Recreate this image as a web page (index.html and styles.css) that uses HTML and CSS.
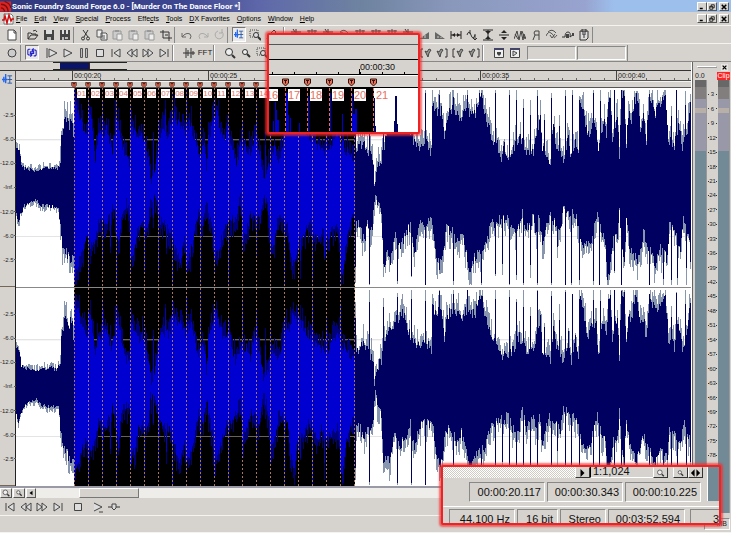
FILE: index.html
```html
<!DOCTYPE html>
<html lang="en">
<head>
<meta charset="utf-8">
<title>Sonic Foundry Sound Forge 6.0</title>
<link rel="stylesheet" href="styles.css">
</head>
<body>
<svg class="sprite" aria-hidden="true">
  <symbol id="new" viewBox="0 0 12 12"><path d="M2 1h6l2 2v8H2z" fill="#fff" stroke="#444"/><path d="M8 1v3h2" fill="none" stroke="#444"/></symbol>
  <symbol id="open" viewBox="0 0 12 12"><path d="M1 10V4h3l1 1h4v2M1 10l3-4h7l-3 4zM6 2q3-2 4 1" fill="none" stroke="#333"/></symbol>
  <symbol id="save" viewBox="0 0 12 12"><path d="M1 1h10v10H1z" fill="#444"/><path d="M3 1h6v4H3z" fill="#ddd"/><path d="M4 8h4v3H4z" fill="#bbb"/></symbol>
  <symbol id="saveas" viewBox="0 0 12 12"><path d="M1 1h10v10H1z" fill="#444"/><path d="M3 1h2v4H3zM7 1h2v4H7z" fill="#ddd"/><path d="M3 8h2v3H3zM6 8h3v2H6z" fill="#bbb"/></symbol>
  <symbol id="cut" viewBox="0 0 12 12"><path d="M3 1l5 7M8 1L4 8" fill="none" stroke="#333"/><circle cx="3" cy="9.500" r="1.500" fill="none" stroke="#333"/><circle cx="8" cy="9.500" r="1.500" fill="none" stroke="#333"/></symbol>
  <symbol id="copy" viewBox="0 0 12 12"><path d="M1 1h5v7H1zM5 4h5l1 1v6H5z" fill="#eee" stroke="#555"/><path d="M6 7h3M6 9h3" stroke="#555"/></symbol>
  <symbol id="paste" viewBox="0 0 12 12"><path d="M1 2h8v8H1z" fill="#ccc" stroke="#999"/><path d="M3 1h4v2H3z" fill="#999"/><path d="M5 5h5v6H5z" fill="#eee" stroke="#999"/></symbol>
  <symbol id="trim" viewBox="0 0 12 12"><path d="M3 1v8h9M0 3h9v9M5 6h3" fill="none" stroke="#333"/></symbol>
  <symbol id="undo" viewBox="0 0 12 12"><path d="M1 4v4h4M1 8q4-5 8-3 2 2 0 5" fill="none" stroke="#666"/></symbol>
  <symbol id="redo" viewBox="0 0 12 12"><path d="M11 4v4H7M11 8Q7 3 3 5q-2 2 0 5" fill="none" stroke="#aaa"/></symbol>
  <symbol id="repeat" viewBox="0 0 12 12"><path d="M9 3a4 4 0 1 1-4-1M9 0v4H6" fill="none" stroke="#aaa"/></symbol>
  <symbol id="edit" viewBox="0 0 12 12"><path d="M0 6h6M2 3v6M4 0v10" stroke="#26e" stroke-width="1.500" fill="none"/><path d="M6 2h5M8.500 2v8M6 10h5M6 6h5" stroke="#25a" fill="none"/></symbol>
  <symbol id="magsel" viewBox="0 0 12 12"><path d="M1 1h8v7H1z" fill="none" stroke="#444" stroke-dasharray="1 1"/><circle cx="7" cy="6" r="2.500" fill="#ddd" stroke="#333"/><path d="M9 8l3 3" stroke="#333" stroke-width="2"/></symbol>
  <symbol id="pencil" viewBox="0 0 12 12"><path d="M2 10l1-3 6-6 2 2-6 6z" fill="none" stroke="#333"/></symbol>
  <symbol id="cross" viewBox="0 0 12 12"><path d="M6 0v12M1 3h10M3 0l2 3" fill="none" stroke="#333"/></symbol>
  <symbol id="tag" viewBox="0 0 12 12"><path d="M1 2h10M3 1v5M6 0v4M9 1v3M2 5l4 3 4-4" fill="none" stroke="#444"/></symbol>
  <symbol id="fin" viewBox="0 0 12 12"><path d="M1 10h10V3z" fill="#666"/><path d="M4 9V7M7 9V6" stroke="#ccc"/></symbol>
  <symbol id="fout" viewBox="0 0 12 12"><path d="M1 10h10L1 3z" fill="#666"/><path d="M4 9V7M7 9V8" stroke="#ccc"/></symbol>
  <symbol id="hspan" viewBox="0 0 12 12"><path d="M1 2v8M11 2v8M1 6h10" stroke="#222"/><path d="M5 4L2 6l3 2zM7 4l3 2-3 2z" fill="#222"/></symbol>
  <symbol id="swap" viewBox="0 0 12 12"><path d="M1 6q2-6 4 0t4 0M4 1v4M9 5v6M7 9l2 2 2-2" fill="none" stroke="#333"/></symbol>
  <symbol id="vspan" viewBox="0 0 12 12"><path d="M1 1h10M1 11h10M6 1v10" stroke="#222"/><path d="M3 2h6L6 5zM3 10h6L6 7z" fill="#222"/></symbol>
  <symbol id="vmid" viewBox="0 0 12 12"><path d="M1 6h10" stroke="#222"/><path d="M3 4l3-3 3 3zM3 8l3 3 3-3z" fill="#222"/></symbol>
  <symbol id="peaks" viewBox="0 0 12 12"><path d="M0 10l3-8 2 9 2-9 2 9 1-6 2 5M1 5l3 5M8 2l3 8" fill="none" stroke="#444"/></symbol>
  <symbol id="rev" viewBox="0 0 12 12"><path d="M9 2v9M9 2H5q-2 2 0 4h4M5 6l-2 5" fill="none" stroke="#444"/></symbol>
  <symbol id="wave" viewBox="0 0 12 12"><path d="M0 7q2-5 5-3t3 4 3-2M2 3q4-4 8 1M4 6l2 3 3-4" fill="none" stroke="#555"/></symbol>
  <symbol id="env" viewBox="0 0 12 12"><path d="M0 8h3q0-5 3-5t2 5l4-3" fill="none" stroke="#333"/><path d="M4 5h3v4H4zM10 4h2v3h-2z" fill="#444"/></symbol>
  <symbol id="clip" viewBox="0 0 12 12"><path d="M2 2h8v7l-2 2H2z" fill="#ddd" stroke="#333"/><path d="M4 0h4v3H4zM4 5h4M6 5v4" fill="none" stroke="#333"/></symbol>
  <symbol id="rec" viewBox="0 0 12 12"><circle cx="6" cy="6" r="4" fill="#ccc" stroke="#444"/></symbol>
  <symbol id="loop" viewBox="0 0 12 12"><path d="M4 2H2L1 3v5l1 1h3M8 10h2l1-1V4l-1-1H7M4 7l2 2-2 2M8 1L6 3l2 2M4 5h4v2H4z" fill="none" stroke="#22c" stroke-width="1.300"/></symbol>
  <symbol id="playall" viewBox="0 0 12 12"><path d="M1 1v10M3 2l8 4-8 4z" fill="#ddd" stroke="#444"/></symbol>
  <symbol id="play" viewBox="0 0 12 12"><path d="M2 2l8 4-8 4z" fill="#ddd" stroke="#444"/></symbol>
  <symbol id="pause" viewBox="0 0 12 12"><path d="M2.500 1.500h2v9h-2zM7.500 1.500h2v9h-2z" fill="#bbb" stroke="#555"/></symbol>
  <symbol id="stop" viewBox="0 0 12 12"><path d="M2.500 2.500h7v7h-7z" fill="#ddd" stroke="#444"/></symbol>
  <symbol id="start" viewBox="0 0 12 12"><path d="M2 2v8M10 2L4 6l6 4z" fill="#ddd" stroke="#444"/></symbol>
  <symbol id="rew" viewBox="0 0 12 12"><path d="M6 2L1 6l5 4zM11 2L6 6l5 4z" fill="#ddd" stroke="#444"/></symbol>
  <symbol id="ff" viewBox="0 0 12 12"><path d="M1 2l5 4-5 4zM6 2l5 4-5 4z" fill="#ddd" stroke="#444"/></symbol>
  <symbol id="end" viewBox="0 0 12 12"><path d="M10 2v8M2 2l6 4-6 4z" fill="#ddd" stroke="#444"/></symbol>
  <symbol id="playfrom" viewBox="0 0 12 12"><path d="M2 2l8 4-8 4M7 11h4" fill="#ddd" stroke="#444"/></symbol>
  <symbol id="scrub" viewBox="0 0 12 12"><path d="M0 6h12" stroke="#333"/><path d="M4 3h4v4L6 9 4 7z" fill="#ddd" stroke="#444"/></symbol>
  <symbol id="bars" viewBox="0 0 12 12"><path d="M0 6h12M3 1v10M5 3v6M8 1v10M10 4v4" stroke="#333"/></symbol>
  <symbol id="mag" viewBox="0 0 12 12"><circle cx="5" cy="5" r="3.500" fill="#eee" stroke="#333"/><path d="M8 8l3 3" stroke="#333" stroke-width="2"/></symbol>
  <symbol id="magsm" viewBox="0 0 12 12"><circle cx="5" cy="5" r="2.500" fill="#eee" stroke="#333"/><path d="M7 7l3 3" stroke="#333" stroke-width="2"/></symbol>
  <symbol id="brl" viewBox="0 0 12 12"><path d="M3 2H1v8h2" fill="none" stroke="#333"/><path d="M5 4l3 6 1-4 2-3-2-1-2 3z" fill="#999" stroke="#444"/></symbol>
  <symbol id="brr" viewBox="0 0 12 12"><path d="M9 2h2v8H9" fill="none" stroke="#333"/><path d="M1 4l3 6 1-4 2-3-2-1-2 3z" fill="#999" stroke="#444"/></symbol>
  <symbol id="win1" viewBox="0 0 12 12"><path d="M1.500 1.500h9v9h-9z" fill="#eee" stroke="#444"/><path d="M1 2h10" stroke="#446" stroke-width="2"/><path d="M4 5h4v2L6 9 4 7z" fill="#444"/></symbol>
  <symbol id="win2" viewBox="0 0 12 12"><path d="M1.500 1.500h9v9h-9z" fill="#eee" stroke="#444"/><path d="M1 2h10" stroke="#446" stroke-width="2"/><path d="M4 4l4 2-4 3z" fill="#ddd" stroke="#444"/></symbol>
  <symbol id="min" viewBox="0 0 8 8"><path d="M1 6h4" stroke="#000" stroke-width="2"/></symbol>
  <symbol id="restore" viewBox="0 0 8 8"><path d="M3 3V1h4v4H5M1 3h4v4H1zM1 4h4" fill="none" stroke="#000"/></symbol>
  <symbol id="close" viewBox="0 0 8 8"><path d="M1 1l6 6M7 1L1 7" stroke="#000" stroke-width="2"/></symbol>
  <symbol id="left" viewBox="0 0 8 8"><path d="M6 1v6L2 4z"/></symbol>
  <symbol id="right" viewBox="0 0 8 8"><path d="M2 0v8l4-4z"/></symbol>
  <symbol id="both" viewBox="0 0 12 8"><path d="M5 0v8L1 4zM7 0v8l4-4z"/></symbol>
  <symbol id="flag" viewBox="0 0 7 8"><path d="M.5.5h6v4l-3 3-3-3z" fill="#e87058" stroke="#301008"/><path d="M2 2h3M3.500 2v3" stroke="#301008"/></symbol>
</svg>

<header class="titlebar">
  <svg class="applogo" viewBox="0 0 12 11"><path d="M0 0h12v11H0z" fill="#d22"/><path d="M1 3q7 0 8 8M1 7q3 0 4 4M5 0q6 2 7 7" fill="none" stroke="#711" stroke-width="1.500"/></svg>
  <h1>Sonic Foundry Sound Forge 6.0 - [Murder On The Dance Floor *]</h1>
  <div class="winbtns">
    <button aria-label="Minimize"><svg><use href="#min"/></svg></button><button aria-label="Restore"><svg><use href="#restore"/></svg></button><button class="apart" aria-label="Close"><svg><use href="#close"/></svg></button>
  </div>
</header>

<nav class="menubar">
  <svg class="doclogo" viewBox="0 0 12 12"><path d="M2 1h7l2 2v8H2z" fill="#fff" stroke="#777"/><path d="M0 7h2l1-4 2 7 2-8 2 6 1-2h2" fill="none" stroke="#c11" stroke-width="1.500"/></svg>
  <button><u>F</u>ile</button><button><u>E</u>dit</button><button><u>V</u>iew</button><button><u>S</u>pecial</button><button><u>P</u>rocess</button><button>Effe<u>c</u>ts</button><button><u>T</u>ools</button><button><u>D</u>X Favorites</button><button><u>O</u>ptions</button><button><u>W</u>indow</button><button><u>H</u>elp</button>
  <div class="winbtns">
    <button aria-label="Minimize document"><svg><use href="#min"/></svg></button><button aria-label="Restore document"><svg><use href="#restore"/></svg></button><button class="apart" aria-label="Close document"><svg><use href="#close"/></svg></button>
  </div>
</nav>

<div class="toolbar" id="bar1"></div>
<div class="toolbar" id="bar2"></div>

<main class="work">
  <section class="editor">
    <div class="overview"><div class="view"><div class="sel"></div></div></div>
    <div class="timeline">
      <button class="corner" aria-label="Edit tool"><svg><use href="#edit"/></svg></button>
      <div class="rows">
        <div class="ruler"><span>00:00:20</span><span>00:00:25</span><span></span><span>00:00:35</span><span>00:00:40</span></div>
        <div class="flags" id="flags"></div>
      </div>
    </div>
    <div class="data">
      <div class="axis">
        <ol><li>-2.5</li><li>-6.0</li><li>-12.0</li><li>-Inf.</li><li>-12.0</li><li>-6.0</li><li>-2.5</li></ol>
        <ol><li>-2.5</li><li>-6.0</li><li>-12.0</li><li>-Inf.</li><li>-12.0</li><li>-6.0</li><li>-2.5</li></ol>
      </div>
      <div class="waves">
        <svg class="channel" viewBox="16 24 674 597" preserveAspectRatio="none"></svg>
        <svg class="channel" viewBox="16 24 674 597" preserveAspectRatio="none"></svg>
        <div class="markers" id="markers"></div>
      </div>
    </div>
    <div class="scroll">
      <button aria-label="Zoom in"><svg><use href="#mag"/></svg></button><button aria-label="Zoom out"><svg><use href="#magsm"/></svg></button><button class="arrow" aria-label="Scroll left"><svg><use href="#left"/></svg></button>
      <div class="track"><div class="thumb"></div></div>
    </div>
    <div class="transport" id="transport"></div>
  </section>
  <aside class="meters">
    <div class="grip"><i></i><button aria-label="Close meters"><svg><use href="#close"/></svg></button></div>
    <div class="peaks"><span>0.0</span><span class="over">Clip</span></div>
    <div class="levels"><div class="level"></div><ol id="db"></ol><div class="level"></div></div>
  </aside>
</main>

<footer class="status"><span>MB</span></footer>

<section class="callout top">
  <div class="c-blank"></div>
  <div class="c-over"></div>
  <div class="c-ruler"><span>00:00:30</span></div>
  <div class="c-flags"><svg><use href="#flag"/></svg><svg><use href="#flag"/></svg><svg><use href="#flag"/></svg><svg><use href="#flag"/></svg><svg><use href="#flag"/></svg></div>
  <div class="c-wave">
    <svg class="c-bars" viewBox="0 0 150 46" preserveAspectRatio="none"><path d="M0 0h105v46H0z"/><path d="M4 46V33h1v13zM6 46V14h1v8h1v10h2v14zM17 46V5h2v22h1v19zM21 46V30h1v16zM30 46V35h1v11zM39 46V8h1v38zM61 46V5h1v41zM73 46V26h1v20zM83 46V6h1v20h2v-5h2v25z" fill="#0000d0"/><path d="M105 46V10h1v28h1v8zM125 46V33h1V8h2v28h1v10z" fill="#000060"/></svg>
    <div class="c-labels"><span>16</span><span>17</span><span>18</span><span>19</span><span>20</span><span>21</span></div>
  </div>
</section>

<section class="callout bottom">
  <div class="c-scroll"><i class="dither"></i><button aria-label="Scroll right"><svg><use href="#right"/></svg></button><b>1:1,024</b><button aria-label="Zoom in"><svg><use href="#mag"/></svg></button><button class="apart" aria-label="Zoom out"><svg><use href="#magsm"/></svg></button><button aria-label="Zoom normal"><svg><use href="#both"/></svg></button><i class="c-meter"></i></div>
  <div class="c-times"><span>00:00:20.117</span><span>00:00:30.343</span><span>00:00:10.225</span><i class="c-meter"></i></div>
  <div class="c-status"><span>44,100 Hz</span><span>16 bit</span><span>Stereo</span><span>00:03:52.594</span><span>3</span></div>
</section>
<script src="app.js"></script>
</body>
</html>
```
FILE: styles.css
```css
* { box-sizing: border-box; }
body {
  margin: 0; height: 100vh; display: flex; flex-direction: column; position: relative; overflow: hidden;
  background: #d6d3ce; color: #222; font-family: "Liberation Sans", Arial, sans-serif; font-size: 7px; line-height: 10px;
}
button { margin: 0; padding: 0; border: 0; background: none; font: inherit; color: inherit; display: block; }
svg { display: block; }
ol { margin: 0; padding: 0; list-style: none; }
.sprite { position: absolute; width: 0; height: 0; }

.titlebar { display: flex; align-items: center; flex: none; height: 12px; background: linear-gradient(90deg, #30387c 0, #3c4590 25%, #5f69aa 36%, #6f84a0 50%, #8a98bc 62%, #98a3cf 80%, #9dbfec 84%); }
.applogo { width: 11px; height: 11px; margin-right: 1px; }
h1 { margin: 0; flex: 1; font-family: Roboto, sans-serif; font-size: 8px; line-height: 11px; color: #fff; white-space: nowrap; }
.winbtns { display: flex; margin-left: auto; padding-right: 2px; }
.winbtns button { width: 10px; height: 9px; padding: 1px; background: #d6d3ce; border: 1px solid; border-color: #fff #555 #555 #fff; }
.winbtns .apart { margin-left: 2px; }
.winbtns svg { width: 6px; height: 6px; }
.menubar { display: flex; align-items: center; flex: none; height: 13px; padding-left: 2px; color: #000; }
.menubar > button { margin-right: 7px; }
.doclogo { width: 12px; height: 12px; margin-right: 2px; }

.toolbar { display: flex; align-items: center; flex: none; height: 18px; border-top: 1px solid #f4f3f0; }
#bar2 { height: 19px; border-bottom: 1px solid #888; }
.tool { flex: none; width: 16px; height: 16px; padding: 2px; font-size: 8px; }
.tool svg { width: 12px; height: 12px; }
.tool.on { width: 14px; height: 15px; padding: 1px; margin-right: 1px; background: #eceae8; border: 1px solid; border-color: #777 #fff #fff #777; }
.tool.on svg { width: 10px; height: 11px; }
.tool.text { padding: 0; }
.sep { flex: none; width: 5px; height: 16px; border-left: 1px solid #888; }
.handle { flex: none; width: 5px; height: 16px; border-left: 1px solid #888; box-shadow: inset 1px 0 #fff; }
.gap { flex: none; width: 4px; }
.panel { flex: none; width: 49px; height: 14px; border: 1px solid; border-color: #888 #fff #fff #888; margin-right: 1px; }

.work { flex: 1; display: flex; min-height: 0; }
.editor { flex: 1; display: flex; flex-direction: column; min-width: 0; border-right: 1px solid #fff; }
.overview { flex: none; height: 9px; padding-left: 53px; border-bottom: 1px solid #333; }
.view { width: 74px; height: 8px; border-top: 1px solid #222; border-bottom: 1px solid #222; padding-left: 7px; }
.sel { width: 30px; height: 6px; background: #0a1468; border-right: 1px solid #421; }
.timeline { display: flex; flex: none; height: 17px; }
.corner { width: 16px; padding: 3px 2px; border-right: 1px solid #555; }
.corner svg { width: 11px; height: 11px; }
.rows { flex: 1; min-width: 0; display: flex; flex-direction: column; }
.ruler {
  height: 10px; display: flex; padding-left: 8.3%; overflow: hidden; border-bottom: 1px solid #555;
  background: repeating-linear-gradient(90deg, transparent 0 13px, #666 13px 14px) 1px 7px / 100% 2px no-repeat;
}
.ruler span { flex: 0 0 136px; padding-left: 1px; line-height: 9px; border-left: 1px solid #444; }
.flags, .markers { display: grid; grid-template-columns: repeat(21, 2.273%); padding-left: 8.6%; }
.flags { height: 7px; border-bottom: 1px solid #555; border-top: 1px solid #f4f3f0; }
.flags svg { width: 6px; height: 6px; margin-left: -3px; }
.data { flex: 1; display: flex; min-height: 0; border-bottom: 2px solid #9a9aa6; }
.axis { width: 16px; display: flex; flex-direction: column; border-right: 1px solid #222; }
.axis ol { flex: 1; min-height: 0; display: grid; grid-auto-rows: 1fr; padding: 15px 0 14px; border-bottom: 1px solid #765; }
.axis li { display: flex; align-items: center; justify-content: flex-end; min-height: 0; font-size: 6px; line-height: 8px; white-space: nowrap; }
.axis li::after { content: ""; width: 2px; height: 1px; background: #555; }
.waves { flex: 1; display: flex; flex-direction: column; position: relative; background: #fff; min-width: 0; overflow: hidden; }
.channel { width: 100%; height: 0; flex: 1 1 0; min-height: 0; border-bottom: 1px solid #888; shape-rendering: crispEdges; }
.channel + .channel { border-bottom: 0; }
.markers { position: absolute; inset: 0; }
.markers span { background: repeating-linear-gradient(#a8745c 0 2px, transparent 2px 4px) 0 0 / 1px 100% no-repeat; padding: 1px 0 0 3px; }
.markers b { display: block; width: 9px; height: 9px; background: #fff; color: #e07868; font-weight: 400; font-size: 8px; line-height: 9px; }

.scroll { display: flex; flex: none; height: 10px; background: #eeede9; }
.scroll button { width: 12px; height: 10px; margin-right: 1px; padding: 0 1px; background: #d6d3ce; border: 1px solid; border-color: #fff #555 #555 #fff; }
.scroll .arrow { width: 10px; margin: 0; }
.scroll svg { width: 8px; height: 8px; }
.scroll .arrow svg { width: 6px; }
.track { flex: 1; padding-left: 43px; }
.thumb { width: 60px; height: 10px; background: #d6d3ce; border: 1px solid; border-color: #fff #777 #777 #fff; }
.transport { display: flex; align-items: center; flex: none; height: 18px; padding-left: 2px; border-bottom: 1px solid #f4f3f0; }

.meters { width: 39px; display: flex; flex-direction: column; padding: 0 1px 3px 2px; border-left: 1px solid #666; }
.grip { display: flex; align-items: center; flex: none; height: 10px; padding: 0 2px; }
.grip i { flex: 1; height: 2px; margin-right: 4px; border: 1px solid; border-color: #fff #999 #999 #fff; }
.grip button { width: 7px; height: 7px; background: #e8e6e2; padding: 1px; }
.grip svg { width: 5px; height: 5px; }
.peaks { display: flex; justify-content: space-between; flex: none; height: 8px; line-height: 8px; }
.peaks .over { width: 13px; background: #f22; color: #fff; text-align: center; }
.levels { flex: 1; display: flex; min-height: 0; }
.level { width: 12px; border-right: 1px solid #999; background: linear-gradient(#686868 0 7px, #827e7e 7px 19px, #9898a8 19px 28px, #b8b0a8 28px 33px, #9898a8 33px 71px, #728a96 71px); }
.levels ol { flex: 1; display: grid; grid-template-rows: minmax(0, 1fr) repeat(29, minmax(0, 2fr)) minmax(0, 1fr); }
.levels li { display: flex; align-items: center; justify-content: space-between; padding: 0 1px; font-size: 6px; line-height: 8px; }
.levels li::before, .levels li::after { content: ""; width: 1px; height: 1px; background: #333; }
.levels li:first-child { visibility: hidden; }
.status { display: flex; justify-content: flex-end; align-items: center; flex: none; height: 17px; padding: 0 1px; border-bottom: 1px solid #f4f3f0; }
.status span { border: 1px solid; border-color: #888 #fff #fff #888; padding: 0 2px 0 12px; }

.callout { position: absolute; overflow: hidden; background: #d6d3ce; border: 2px solid #ee2424; border-radius: 2px; color: #111; font-size: 11px; box-shadow: 0 0 2px 2px #f03030b0; }
.callout.top { left: 267px; top: 33px; width: 153px; height: 101px; }
.c-blank { height: 10px; border-bottom: 1px solid #555; }
.c-over { height: 15px; border-bottom: 1px solid #000; }
.c-ruler {
  height: 15px; padding-left: 90px; border-bottom: 1px solid #000;
  background: repeating-linear-gradient(90deg, transparent 0 3px, #000 3px 4px, transparent 4px 22px) 0 12px / 100% 2px no-repeat;
}
.c-ruler span { display: block; height: 14px; padding-left: 1px; font-size: 9px; line-height: 15px; background: linear-gradient(#000, #000) 0 100% / 1px 5px no-repeat; }
.c-flags { height: 13px; padding: 2px 0 0 13px; display: flex; gap: 15px; border-top: 1px solid #fff; border-bottom: 1px solid #000; }
.c-flags svg { flex: none; width: 7px; height: 9px; }
.c-wave { position: relative; height: 46px; background: #fff; }
.c-bars { width: 150px; height: 46px; shape-rendering: crispEdges; }
.c-labels { position: absolute; inset: 0; display: flex; }
.c-labels span { flex: 0 0 22px; padding: 1px 0 0 3px; font-size: 11px; line-height: 13px; color: #e8705c; background: linear-gradient(#fff, #fff) 3px 1px / 12px 12px no-repeat, repeating-linear-gradient(#e8705c 0 3px, transparent 3px 5px) 0 0 / 1px 100% no-repeat; }
.c-labels span:first-child { flex-basis: 16px; padding-left: 0; text-indent: -3px; background: linear-gradient(#fff, #fff) 0 1px / 9px 12px no-repeat; }
.callout.bottom { right: 10px; bottom: 8px; width: 280px; height: 60px; }
.c-scroll, .c-times, .c-status { display: flex; }
.c-scroll { height: 11px; }
.dither { flex: 1; background: repeating-conic-gradient(#fff 0 25%, #d0ccc4 0 50%) 0 0 / 2px 2px; }
.c-scroll button { width: 15px; background: #d6d3ce; border: 1px solid; border-color: #d6d3ce #333 #333 #fff; padding: 0 1px; }
.c-scroll .apart { margin-left: 5px; }
.c-scroll button svg { width: 11px; height: 8px; }
.c-scroll b { width: 63px; padding-left: 2px; font-weight: 400; line-height: 9px; border-left: 1px solid #000; border-bottom: 1px solid #fff; }
.c-meter { width: 12px; margin-left: 4px; background: #728a96; border-left: 1px solid #fff; }
.c-times { height: 29px; gap: 2px; padding-left: 26px; border-bottom: 1px solid #fff; }
.c-times span, .c-status span { border: 1px solid; border-color: #888 #fff #fff #888; text-align: right; white-space: nowrap; }
.c-times span { width: 76px; height: 20px; margin-top: 4px; padding-right: 3px; line-height: 18px; }
.c-times .c-meter { height: 23px; margin-left: auto; }
.c-status { height: 18px; padding: 2px 0 0 6px; gap: 2px; }
.c-status span { flex: none; padding: 0 4px; line-height: 18px; height: 20px; }
.c-status span:nth-child(1) { width: 66px; }
.c-status span:nth-child(2) { width: 41px; }
.c-status span:nth-child(3) { width: 46px; }
.c-status span:nth-child(4) { width: 77px; }
.c-status span:nth-child(5) { width: 40px; margin-left: 3px; padding-right: 10px; }
```
FILE: app.js
```js
// Toolbars: "|" separator, "#" gripper, "_" small gap, "[]" readout panel, "*" marks a pressed tool.
function fill(id, spec) {
  document.getElementById(id).innerHTML = spec.split(" ").map(function (t) {
    if (t === "|") return '<i class="sep"></i>';
    if (t === "#") return '<i class="handle"></i>';
    if (t === "_") return '<i class="gap"></i>';
    if (t === "[]") return '<i class="panel"></i>';
    if (t === "FFT") return '<button class="tool text">FFT</button>';
    var on = t[0] === "*", name = t.replace("*", "");
    return '<button class="tool' + (on ? " on" : "") + '" aria-label="' + name + '"><svg><use href="#' + name + '"/></svg></button>';
  }).join("");
}
fill("bar1", "_ new # open save saveas | cut copy paste paste paste trim | undo redo repeat | *edit magsel pencil _ # cross tag cross wave tag tag tag cross fin fout hspan swap vspan vmid peaks rev wave env clip |");
fill("bar2", "_ rec | *loop _ playall play pause stop start rew ff end # _ bars FFT # _ mag magsm magsel cross tag tag wave tag cross bars tag _ wave brl brr brl brr # _ win1 win2 _ [] [] |");
fill("transport", "start rew ff end _ stop _ playfrom scrub");

// The last markers lie behind the magnified inset, which carries their numbers.
var flags = "", marks = "";
for (var i = 1; i <= 21; i++) {
  flags += '<svg><use href="#flag"/></svg>';
  marks += "<span>" + (i <= 14 ? "<b>" + (i < 10 ? "0" : "") + i + "</b>" : "") + "</span>";
}
document.getElementById("flags").innerHTML = flags;
document.getElementById("markers").innerHTML = marks;

var db = "<li></li>";
for (var d = 3; d <= 87; d += 3) db += "<li>" + (d <= 78 ? d : "") + "</li>";
document.getElementById("db").innerHTML = db;

// Envelope points as "x level" pairs; silence is level 325.
var TOP = "16 205 19 212 21 258 24 265 30 268 36 275 44 268 50 262 56 270 60 255 61 180 64 130 66 118 69 150 70 120 72 130 73 180 74 70 76 75 80 120 84 150 87 165 88 80 91 110 95 235 98 170 102 100 106 150 109 180 112 210 116 100 118 120 121 190 124 230 129 245 130 130 134 160 138 185 142 170 145 200 148 240 151 310 153 180 156 250 158 190 162 150 165 80 169 170 172 100 176 120 180 130 185 160 186 70 190 130 195 185 198 220 200 90 204 200 206 275 208 180 212 130 216 90 220 150 224 180 228 140 232 210 236 250 240 200 242 120 246 210 250 230 254 170 256 110 260 230 263 300 265 210 268 265 270 150 274 210 278 240 282 210 284 140 288 150 292 110 300 130 305 150 310 170 312 80 316 190 321 205 325 220 326 130 332 190 338 170 340 90 345 210 350 230 353 240 354 130 358 200 362 180 366 210 368 60 372 240 373 330 375 270 380 240 382 80 386 150 396 40 402 100 406 150 410 60 415 190 419 200 424 50 426 190 430 220 431 80 434 95 438 35 440 90 443 175 446 110 450 90 452 35 457 100 460 130 464 90 466 35 470 100 474 100 477 60 480 40 484 110 488 140 491 180 494 40 496 190 500 240 503 200 507 230 508 40 512 210 515 70 518 170 522 70 526 220 529 100 532 220 534 190 536 50 539 120 541 210 543 130 546 220 549 250 550 60 552 130 555 200 558 130 561 240 563 250 564 40 567 170 570 240 571 35 574 170 577 225 578 50 581 80 584 140 587 170 590 140 592 50 595 140 597 225 599 50 602 120 605 160 607 60 609 40 611 180 613 30 616 110 618 230 620 35 623 50 625 200 627 100 630 120 633 60 636 50 639 140 642 110 645 180 648 50 651 70 654 100 658 80 661 60 664 40 667 180 670 100 673 200 675 40 677 130 681 210 684 70 686 150 690 40";
var BOTTOM = "16 400 18 430 20 400 24 380 30 365 36 360 40 375 50 380 58 385 60 440 62 490 66 515 70 545 73 530 74 590 76 570 79 540 83 500 87 470 88 600 90 500 95 490 98 420 101 410 102 540 106 440 109 410 110 500 112 385 115 400 116 600 118 500 121 400 126 370 129 390 130 550 134 510 138 440 142 430 144 560 147 450 150 350 153 420 156 360 158 550 160 420 163 430 166 520 170 450 172 610 176 520 180 540 184 470 186 550 190 520 194 460 198 400 200 590 202 440 206 360 209 410 212 450 214 540 218 520 222 470 226 430 228 580 232 420 236 400 240 350 242 480 246 450 250 400 256 500 260 420 263 350 267 380 270 510 274 480 278 400 282 400 284 580 288 450 290 530 294 560 298 480 300 530 304 470 309 420 312 600 316 480 321 450 324 540 328 480 332 450 338 440 340 570 343 570 346 480 350 430 353 410 354 560 358 440 360 460 363 490 366 430 368 610 371 440 374 340 376 370 380 400 382 560 386 520 389 540 393 460 396 610 398 500 402 480 406 460 409 430 410 600 413 520 416 460 421 425 424 610 428 430 431 420 434 510 438 560 441 530 445 450 450 450 452 615 455 490 460 460 464 500 468 580 472 540 477 510 480 600 484 500 488 450 492 430 494 580 497 420 501 550 504 420 507 400 508 610 511 450 515 590 518 440 521 390 522 600 525 450 529 560 532 410 534 450 536 600 538 410 541 500 544 460 548 410 550 600 553 430 556 500 559 450 562 390 564 610 567 400 570 600 573 400 576 430 578 600 581 500 585 500 590 480 592 610 596 400 598 610 600 460 604 490 606 590 609 560 612 460 613 560 616 480 618 400 620 615 623 560 625 410 628 500 632 520 636 540 640 490 643 450 645 500 648 615 651 520 654 560 658 500 662 590 666 540 668 440 670 590 674 460 676 610 679 500 682 420 685 570 688 480 690 600";

// Expand the points to one level per column. An isolated extreme stays one column wide.
function expand(text, dir) {
  var n = text.split(" ").map(Number), pts = [], spikes = {}, out = {};
  for (var i = 0; i < n.length; i += 2) pts.push([n[i], n[i + 1]]);
  var base = pts.filter(function (p, i) {
    if (i === 0 || i === pts.length - 1) return true;
    var a = (p[1] - pts[i - 1][1]) * dir, b = (p[1] - pts[i + 1][1]) * dir;
    if (a > 45 && b > 45) { spikes[p[0]] = p[1]; return false; }
    return true;
  });
  for (var k = 0; k < base.length - 1; k++) {
    var p = base[k], q = base[k + 1];
    for (var x = p[0]; x <= q[0]; x++) out[x] = p[1] + (q[1] - p[1]) * (x - p[0]) / (q[0] - p[0]);
  }
  for (var s in spikes) out[s] = spikes[s];
  return out;
}
function noise(n) { var v = Math.sin(n * 127.1 + 11.7) * 43758.5453; return v - Math.floor(v); }

document.querySelectorAll(".channel").forEach(function (svg, c) {
  var top = expand(TOP, -1), bottom = expand(BOTTOM, 1);
  function path(from, to, soft) {
    var d = "";
    for (var x = from; x < to; x++) {
      var amp = x < 60 ? 12 : 34, t = top[x], b = bottom[x];
      t += (noise(x + c * 3) - 0.5) * amp;
      b += (noise(x * 2 + 900 + c * 5) - 0.5) * amp;
      if (soft) { t -= noise(x * 3 + c) * amp * 1.6; b += noise(x * 5 + c) * amp * 1.6; }
      t = Math.max(30, Math.min(320, t)); b = Math.min(617, Math.max(330, b));
      d += "M" + x + " " + t.toFixed(0) + "h1V" + b.toFixed(0) + "h-1z";
    }
    return d;
  }
  svg.innerHTML =
    '<path d="M16 180h674M16 471h674" stroke="#dcdcdc" stroke-width="3"/>' +
    '<path d="M74 24h280v597H74z"/>' +
    '<path d="M74 180h280M74 471h280" stroke="#8a8478" stroke-width="3"/>' +
    '<path fill="#8796ae" d="' + path(16, 74, true) + path(354, 690, true) + '"/>' +
    '<path fill="#000078" d="' + path(74, 354, true) + '"/>' +
    '<path fill="#000060" d="' + path(16, 74) + path(354, 690) + '"/>' +
    '<path fill="#0000d0" d="' + path(74, 354) + '"/>';
});
```
